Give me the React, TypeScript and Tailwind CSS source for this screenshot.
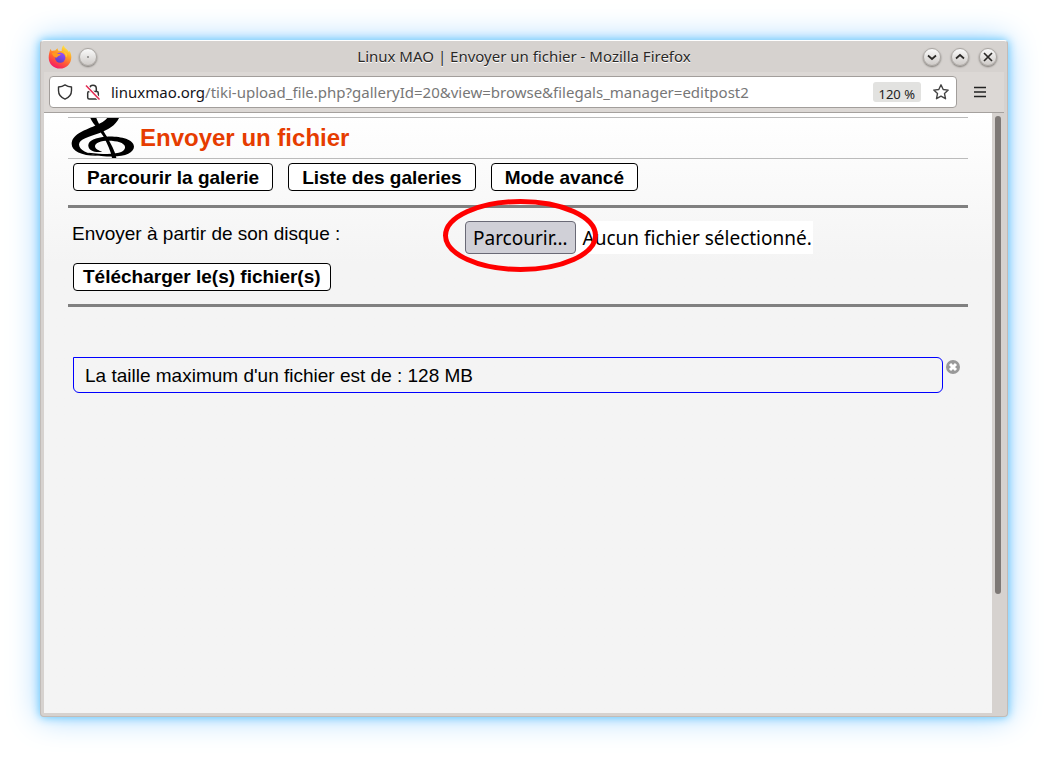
import { useRef } from 'react'

function FirefoxLogo() {
  return (
    <svg width="24" height="24" viewBox="0 0 24 24" aria-hidden="true">
      <defs>
        <linearGradient id="flame" x1="0.8" y1="0" x2="0.3" y2="1">
          <stop offset="0" stopColor="#fff04a" />
          <stop offset="0.35" stopColor="#ffa726" />
          <stop offset="0.65" stopColor="#ff5a36" />
          <stop offset="1" stopColor="#f4156a" />
        </linearGradient>
        <linearGradient id="globe" x1="0.7" y1="0" x2="0.3" y2="1">
          <stop offset="0" stopColor="#9a4dff" />
          <stop offset="1" stopColor="#5a3fc0" />
        </linearGradient>
      </defs>
      <path
        d="M2.600 3.800c.2 1 .6 1.700 1.200 2.200 1-.5 2.200-.7 3.400-.4.6-1 1.500-1.800 2.600-2.300-.2.900 0 1.700.5 2.400l3.400.2c-.1-2.200.5-4.300 2-5.600.4 2 1.600 3 3.200 4.200 1 .8 1.500 1.600 1.800 2.600.4-.3.600-.7.700-1.300 1.300 2 2 4.300 1.900 6.700C23.200 19 18.300 23.600 12 23.600 5.600 23.600.7 19 .7 12.700c0-3.300.8-6.300 1.900-8.900z"
        fill="url(#flame)"
      />
      <circle cx="12.200" cy="12.600" r="5.200" fill="url(#globe)" />
      <path
        d="M3.800 8.200c2-1 4.500-.9 5.900.6.900.2 1.900.2 2.900.3.200.9-.8 1.500-2.200 2-.8.900-1.300 1.400-2.300 1.600-1.800-.6-3.500-2.200-4.300-4.500z"
        fill="#ff9a1f"
      />
      <path d="M14 6.200c2.500 1.200 4 3.500 3.900 6.300 1-.9 1.400-2.300 1.200-3.700-1-1.700-3-2.600-5.100-2.600z" fill="#ffc53a" />
    </svg>
  )
}

function ClefLogo() {
  return (
    <svg width="64" height="40" viewBox="8 12 192 120" aria-hidden="true">
      <path d="M118 10L153 10C142 34 122 46 92 58C62 69 32 76 32 92C34 108 54 119 95 125C45 128 10 112 10 90C10 62 45 50 80 35C100 27 112 20 118 10z" />
      <path d="M66 12L84 12C90 30 104 48 117 70C127 90 140 110 144 132L131 132C128 112 116 88 108 72C96 50 76 34 66 12z" />
      <path d="M60 119C150 138 196 122 197 98C196 74 150 66 115 68C80 70 58 80 60 96C62 112 82 116 102 113C90 110 80 104 80 97C80 86 98 80 120 80C146 80 168 86 170 98C172 114 150 126 60 116z" />
    </svg>
  )
}

type Glyph = 'dot' | 'down' | 'up' | 'close'

const GLYPHS: Record<Glyph, string> = {
  dot: 'M9.500 10h1',
  down: 'M6 8.500l4 3.500 4-3.500',
  up: 'M6 11.500L10 8l4 3.500',
  close: 'M6 6l8 8M14 6l-8 8',
}

function WindowButton({ glyph, label }: { glyph: Glyph; label: string }) {
  return (
    <button
      type="button"
      aria-label={label}
      className="flex size-[18px] items-center justify-center rounded-full border border-[#aaa6a2] bg-linear-to-b from-[#fafafa] to-[#cfcbc8] shadow-[0_1px_2px_#7a7672]"
    >
      <svg className="shrink-0" width="20" height="20" viewBox="0 0 20 20" fill="none" stroke="#2a2826" strokeWidth={glyph === 'dot' ? 1.5 : 1.7}>
        <path d={GLYPHS[glyph]} />
      </svg>
    </button>
  )
}

function TitleBar() {
  return (
    <header className="flex h-[31px] items-center px-[7px]">
      <div className="flex w-20 items-center gap-[7px]">
        <FirefoxLogo />
        <WindowButton glyph="dot" label="Sur tous les bureaux" />
      </div>
      <h1 className="flex-1 text-center text-[15px] text-[#2a2826] [text-shadow:0_1px_0_#fff]">
        Linux MAO | Envoyer un fichier - Mozilla Firefox
      </h1>
      <div className="flex w-20 items-center justify-end gap-[10px] pr-[3px]">
        <WindowButton glyph="down" label="Réduire" />
        <WindowButton glyph="up" label="Agrandir" />
        <WindowButton glyph="close" label="Fermer" />
      </div>
    </header>
  )
}

function AddressBar() {
  return (
    <div className="mx-[3px] flex h-[41px] items-center border-b border-[#a5a19e] bg-[#dcd8d5] pr-[18px] pl-[5px]">
      <div className="flex h-8 flex-1 items-center rounded border border-[#a29e9b] bg-white px-[7px]">
        <svg width="16" height="16" viewBox="0 0 16 16" fill="none" stroke="#333" strokeWidth="1.4" strokeLinejoin="round" aria-hidden="true">
          <path d="M8 .9C6 2.300 4 2.900 1.500 3v3.500c0 4 2.500 7 6.500 8.600 4-1.600 6.500-4.600 6.500-8.600V3C12 2.900 10 2.300 8 .9z" />
        </svg>
        <svg className="ml-3" width="16" height="16" viewBox="0 0 16 16" fill="none" stroke="#333" strokeWidth="1.5" aria-hidden="true">
          <path d="M4.700 7V4.500a3.300 3.300 0 0 1 6.600 0V7" />
          <rect x="2.700" y="7.500" width="10.600" height="7.500" rx="1.500" />
          <path d="M1 1.500l13.500 14" stroke="#fff" strokeWidth="3.500" />
          <path d="M1 1.500l13.500 14" stroke="#e22850" />
        </svg>
        <p className="ml-[10px] flex-1 text-[15px] text-[#777]">
          <span className="text-[#15141a]">linuxmao.org</span>
          /tiki-upload_file.php?galleryId=20&amp;view=browse&amp;filegals_manager=editpost2
        </p>
        <button type="button" className="h-5 rounded-[3px] bg-[#e2e2e0] px-[6px] pt-1 text-[13px] leading-4 text-[#222]">
          120 %
        </button>
        <button type="button" aria-label="Marquer cette page" className="ml-3">
          <svg width="16" height="16" viewBox="0 0 16 16" fill="none" stroke="#444" strokeWidth="1.400" strokeLinejoin="round">
            <path d="M8 .8l2.200 4.700 5 .6-3.700 3.500 1 5.100L8 12.200l-4.500 2.500 1-5.100L.8 6.100l5-.6z" />
          </svg>
        </button>
      </div>
      <button type="button" aria-label="Menu" className="ml-[17px]">
        <svg width="12" height="12" viewBox="0 0 12 12" stroke="#222" strokeWidth="1.300">
          <path d="M0 1.500h12M0 6h12M0 10.500h12" />
        </svg>
      </button>
    </div>
  )
}

const LINKS = ['Parcourir la galerie', 'Liste des galeries', 'Mode avancé']

function UploadPage() {
  const fileRef = useRef<HTMLInputElement>(null)

  return (
    <main className="flex-1 bg-[#f4f4f4] bg-linear-to-b from-white to-[#f4f4f4] to-[150px] px-6 pt-1 font-['Liberation_Sans',Arial,sans-serif] text-[19px] leading-6 text-black">
      <div className="flex h-[42px] items-center gap-[5px] border-y border-[#bbb] pl-[3px]">
        <ClefLogo />
        <h2 className="text-2xl font-bold text-[#e63c00]">Envoyer un fichier</h2>
      </div>

      <nav className="mt-1 ml-[5px] flex gap-[15px] font-bold">
        {LINKS.map((label) => (
          <a key={label} href="#" className="h-7 rounded-[4px] border border-black bg-white px-[13px] leading-[27px]">
            {label}
          </a>
        ))}
      </nav>

      <hr className="mt-[14px] border-t-3 border-[#808080]" />

      <form onSubmit={(e) => e.preventDefault()}>
        <div className="mt-[13px] flex">
          <label htmlFor="userfile" className="w-[44%] pl-1 leading-[26px]">
            Envoyer à partir de son disque :
          </label>
          <div className="ml-px flex h-[33px] items-center bg-white font-['Noto_Sans',sans-serif]">
            <div className="relative">
              <button
                type="button"
                onClick={() => fileRef.current?.click()}
                className="h-[33px] rounded-[4px] border border-[#6a6a76] bg-[#d0d0d7] px-[7px]"
              >
                Parcourir…
              </button>
              {/* Red marker circled around the browse button */}
              <svg className="pointer-events-none absolute -top-[22px] -left-[22px] z-10 max-w-none" width="155" height="73" viewBox="0 0 155 73" fill="none" aria-hidden="true">
                <ellipse cx="77.500" cy="36.500" rx="75" ry="34" stroke="#f00" strokeWidth="5" />
              </svg>
            </div>
            <input ref={fileRef} id="userfile" type="file" className="hidden" />
            <span className="pr-px pl-[7px]">Aucun fichier sélectionné.</span>
          </div>
        </div>
        <button type="submit" className="mt-[9px] ml-[5px] h-7 rounded-[4px] border border-black bg-white px-[9px] font-bold">
          Télécharger le(s) fichier(s)
        </button>
      </form>

      <hr className="mt-[13px] border-t-3 border-[#808080]" />

      <div className="mt-[50px] mr-2 ml-[5px] flex items-start gap-[3px]">
        <p className="h-9 flex-1 rounded-md rounded-tl-none border border-[#0000ff] px-[11px] leading-[35px]">
          La taille maximum d'un fichier est de : 128 MB
        </p>
        <button type="button" aria-label="Fermer le message" className="mt-[3px]">
          <svg width="14" height="14" viewBox="0 0 14 14">
            <circle cx="7" cy="7" r="7" fill="#999" />
            <path d="M4 4l6 6M10 4l-6 6" stroke="#fff" strokeWidth="3" />
          </svg>
        </button>
      </div>
    </main>
  )
}

export default function App() {
  return (
    <div className="min-h-screen bg-white p-10 font-['Noto_Sans',sans-serif]">
      <div className="flex min-h-[calc(100vh-80px)] flex-col rounded-[4px] border-t border-r border-b border-l border-t-white border-r-[#c2bcb8] border-b-[#c2bcb8] border-l-[#c2bcb8] bg-[#d6d2cf] shadow-[0_0_10px_#5cc4fa,0_0_32px_#a0d4ff]">
        <TitleBar />
        <AddressBar />
        <div className="mx-[3px] mb-[3px] flex flex-1">
          <UploadPage />
          <div className="w-3 px-[3px] pt-[3px]">
            <div className="h-[80%] w-[6px] rounded-full bg-[#7d7875]" />
          </div>
        </div>
      </div>
    </div>
  )
}
